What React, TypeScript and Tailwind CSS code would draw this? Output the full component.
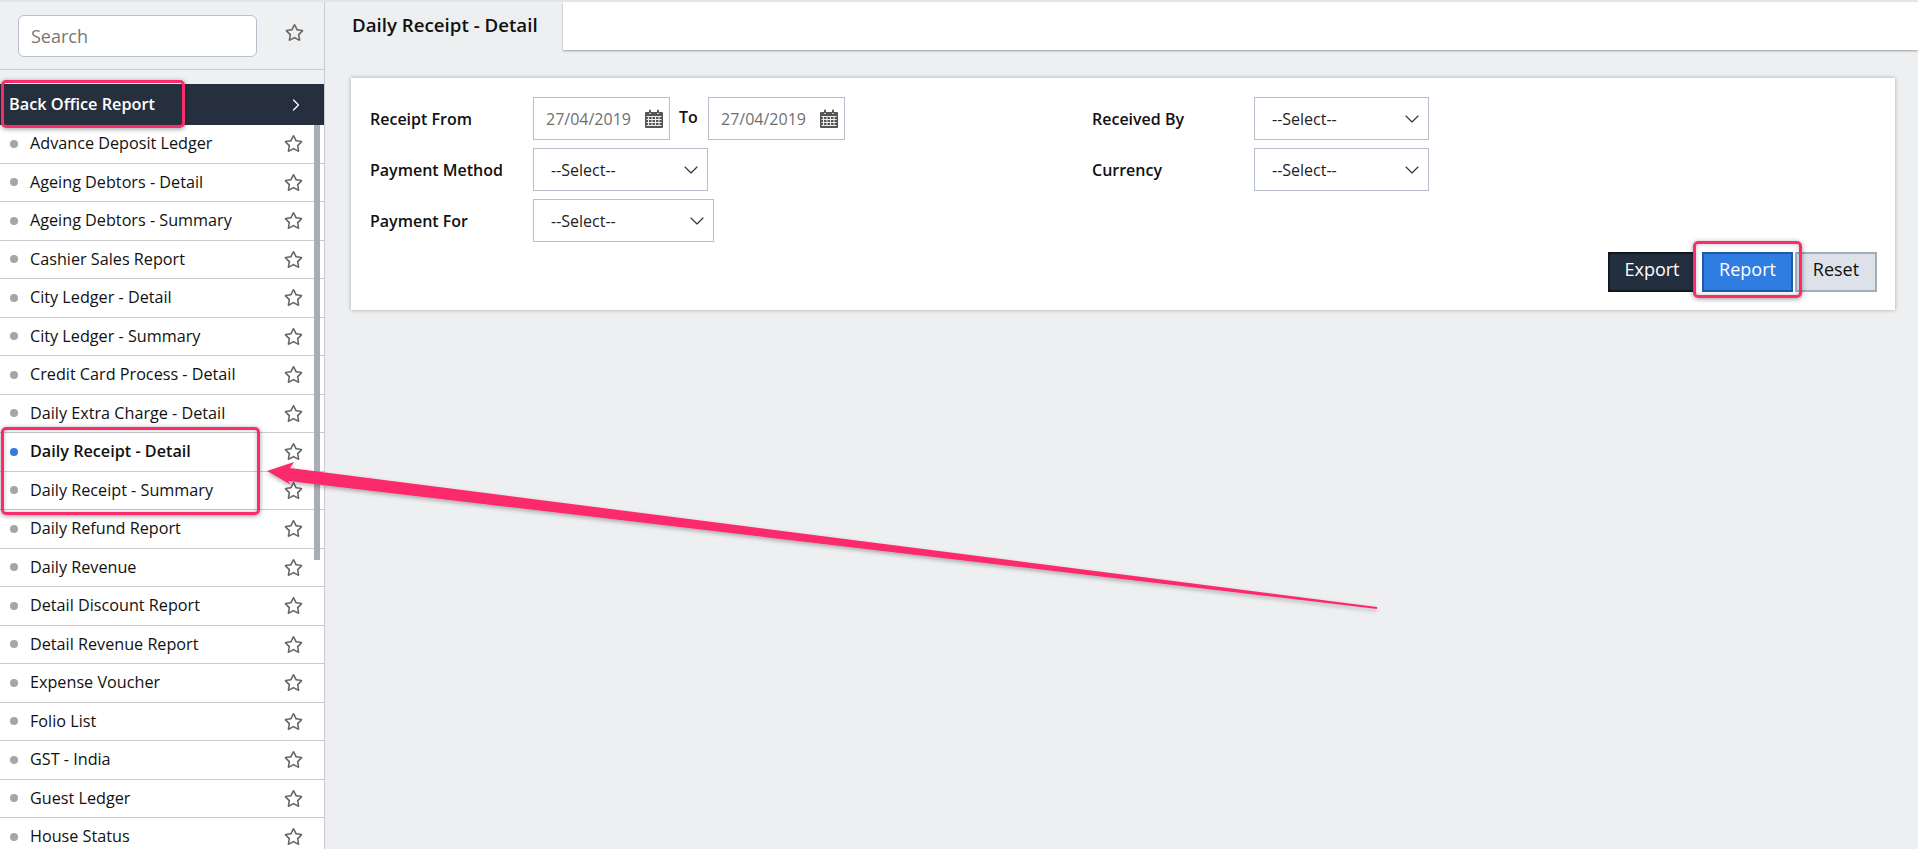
import { ChevronDown, ChevronRight } from 'lucide-react';
import { FaRegStar } from 'react-icons/fa';

const reports = [
    'Advance Deposit Ledger',
    'Ageing Debtors - Detail',
    'Ageing Debtors - Summary',
    'Cashier Sales Report',
    'City Ledger - Detail',
    'City Ledger - Summary',
    'Credit Card Process - Detail',
    'Daily Extra Charge - Detail',
    'Daily Receipt - Detail',
    'Daily Receipt - Summary',
    'Daily Refund Report',
    'Daily Revenue',
    'Detail Discount Report',
    'Detail Revenue Report',
    'Expense Voucher',
    'Folio List',
    'GST - India',
    'Guest Ledger',
    'House Status',
];

function CalendarIcon() {
    return (
        <svg width="18" height="19" viewBox="0 0 18 19" className="shrink-0">
            <path fill="#555" d="M1 3h3v2h2V3h6v2h2V3h3a1 1 0 0 1 1 1v14a1 1 0 0 1-1 1H1a1 1 0 0 1-1-1V4a1 1 0 0 1 1-1z" />
            <rect x="4" y="0.5" width="2" height="4" rx="1" fill="#555" />
            <rect x="12" y="0.5" width="2" height="4" rx="1" fill="#555" />
            <path
                stroke="#eee"
                strokeWidth="1"
                d="M1.5 7.5h15M1.5 10.5h15M1.5 13.5h15M1.5 16.5h15M3.5 7v10M7 7v10M10.5 7v10M14 7v10"
            />
        </svg>
    );
}

function DateField() {
    return (
        <div className="flex h-[43px] w-[137px] items-center border border-[#b8bfcc] bg-white pl-[12px] pr-[6px] text-[#6f6f6f]">
            <span className="flex-1">27/04/2019</span>
            <CalendarIcon />
        </div>
    );
}

function SelectField({ width }: { width: string }) {
    return (
        <div className={`flex h-[43px] ${width} items-center justify-between border border-[#b8bfcc] bg-white pl-[17px] pr-[4px] text-[#222]`}>
            <span>--Select--</span>
            <ChevronDown size={24} strokeWidth={1.15} className="text-[#333]" />
        </div>
    );
}

export default function App() {
    return (
        <div
            className="relative flex h-[849px] w-[1918px] overflow-hidden border-t-2 border-[#e4e5e7] bg-[#edeff1] text-[16px] text-[#111]"
            style={{ fontFamily: '"Open Sans", sans-serif' }}
        >
            {/* Sidebar */}
            <div className="relative w-[325px] shrink-0 border-r border-[#c9cbcf] bg-[#eff0f2]">
                <div className="flex h-[68px] items-start border-b border-[#c9cbcf] pl-[18px] pt-[13px]">
                    <div className="flex h-[42px] w-[239px] items-center rounded-[6px] border border-[#b8bfcc] bg-white pl-[12px] text-[18px] text-[#777]">
                        Search
                    </div>
                    <FaRegStar size={19} className="ml-[28px] mt-[8px] text-[#666]" />
                </div>
                <div className="h-[14px]" />
                <div className="flex h-[41px] items-center justify-between bg-[#252f3e] pl-[9px] pr-[18px] text-[16.3px] font-semibold text-white">
                    <span>Back Office Report</span>
                    <ChevronRight size={20} strokeWidth={1.5} />
                </div>
                <div className="bg-white text-[16.2px]">
                    {reports.map((name) => {
                        const active = name === 'Daily Receipt - Detail';
                        return (
                            <div key={name} className="flex h-[38.5px] items-center border-b border-[#c9cbcf] pl-[10px] pr-[21px]">
                                <span className={`h-[8px] w-[8px] rounded-full ${active ? 'bg-[#2f7de1]' : 'bg-[#a6a6a6]'}`} />
                                <span className={`ml-[12px] mb-[1px] flex-1 ${active ? 'font-semibold' : ''}`}>{name}</span>
                                <FaRegStar size={19} className="text-[#666]" />
                            </div>
                        );
                    })}
                </div>
                {/* scrollbar */}
                <div className="absolute left-[314px] top-[123px] h-[435px] w-[6px] bg-[#a9adb6]" />
            </div>

            {/* Main */}
            <div className="min-w-0 flex-1">
                <div className="flex h-[50px]">
                    <div className="flex w-[238px] items-center pb-[3px] pl-[27px] text-[18.7px] font-semibold">Daily Receipt - Detail</div>
                    <div className="h-[48px] flex-1 bg-white shadow-[0_1px_2px_rgba(0,0,0,0.35)]" />
                </div>
                <div className="ml-[26px] mr-[23px] mt-[26px] h-[232px] bg-white pl-[19px] pr-[18px] pt-[19px] shadow-[0_0_4px_rgba(0,0,0,0.3)]">
                    <div className="flex">
                        <div className="flex w-[722px] flex-col">
                            <div className="flex items-center">
                                <span className="w-[163px] font-semibold">Receipt From</span>
                                <DateField />
                                <span className="ml-[9px] mr-[9px] mb-[3px] w-[20px] font-semibold">To</span>
                                <DateField />
                            </div>
                            <div className="mt-[8px] flex items-center">
                                <span className="w-[163px] font-semibold">Payment Method</span>
                                <SelectField width="w-[175px]" />
                            </div>
                            <div className="mt-[8px] flex items-center">
                                <span className="w-[163px] font-semibold">Payment For</span>
                                <SelectField width="w-[181px]" />
                            </div>
                        </div>
                        <div className="flex flex-col">
                            <div className="flex items-center">
                                <span className="w-[162px] font-semibold">Received By</span>
                                <SelectField width="w-[175px]" />
                            </div>
                            <div className="mt-[8px] flex items-center">
                                <span className="w-[162px] font-semibold">Currency</span>
                                <SelectField width="w-[175px]" />
                            </div>
                        </div>
                    </div>
                    <div className="mt-[10px] flex justify-end text-[18px]">
                        <button className="ml-auto h-[40px] w-[88px] border-2 border-[#12181f] bg-[#232f3e] pb-[5px] text-white">Export</button>
                        <button className="ml-[6px] h-[40px] w-[91px] border-2 border-[#1a5aa8] bg-[#2f7de1] pb-[5px] text-white">Report</button>
                        <button className="ml-[2px] h-[40px] w-[82px] border-2 border-[#a4adb8] bg-[#dde2ea] pb-[5px]">Reset</button>
                    </div>
                </div>
            </div>

            {/* Annotations drawn over the screenshot */}
            <div className="absolute left-[1px] top-[78px] h-[48px] w-[184px] rounded-[5px] border-[3px] border-[#fb2c6c] shadow-[0_1px_5px_rgba(0,0,0,0.4)]" />
            <div className="absolute left-[1px] top-[425px] h-[88px] w-[259px] rounded-[5px] border-[3px] border-[#fb2c6c] shadow-[0_1px_5px_rgba(0,0,0,0.4),inset_0_0_4px_rgba(0,0,0,0.25)]" />
            <div className="absolute left-[1693px] top-[239px] h-[57px] w-[109px] rounded-[5px] border-[3px] border-[#fb2c6c] shadow-[0_1px_5px_rgba(0,0,0,0.4),inset_0_0_4px_rgba(0,0,0,0.25)]" />
            <svg width="1918" height="849" className="pointer-events-none absolute -top-[2px] left-0">
                <defs>
                    <filter id="arrowShadow" x="-5%" y="-20%" width="110%" height="150%">
                        <feDropShadow dx="0" dy="2" stdDeviation="2" floodColor="#000" floodOpacity="0.3" />
                    </filter>
                </defs>
                <polygon
                    fill="#fb2c6c"
                    filter="url(#arrowShadow)"
                    points="267,471 294,462 290,468 1377,607 1377,609 288,481 291,485"
                />
            </svg>
        </div>
    );
}
